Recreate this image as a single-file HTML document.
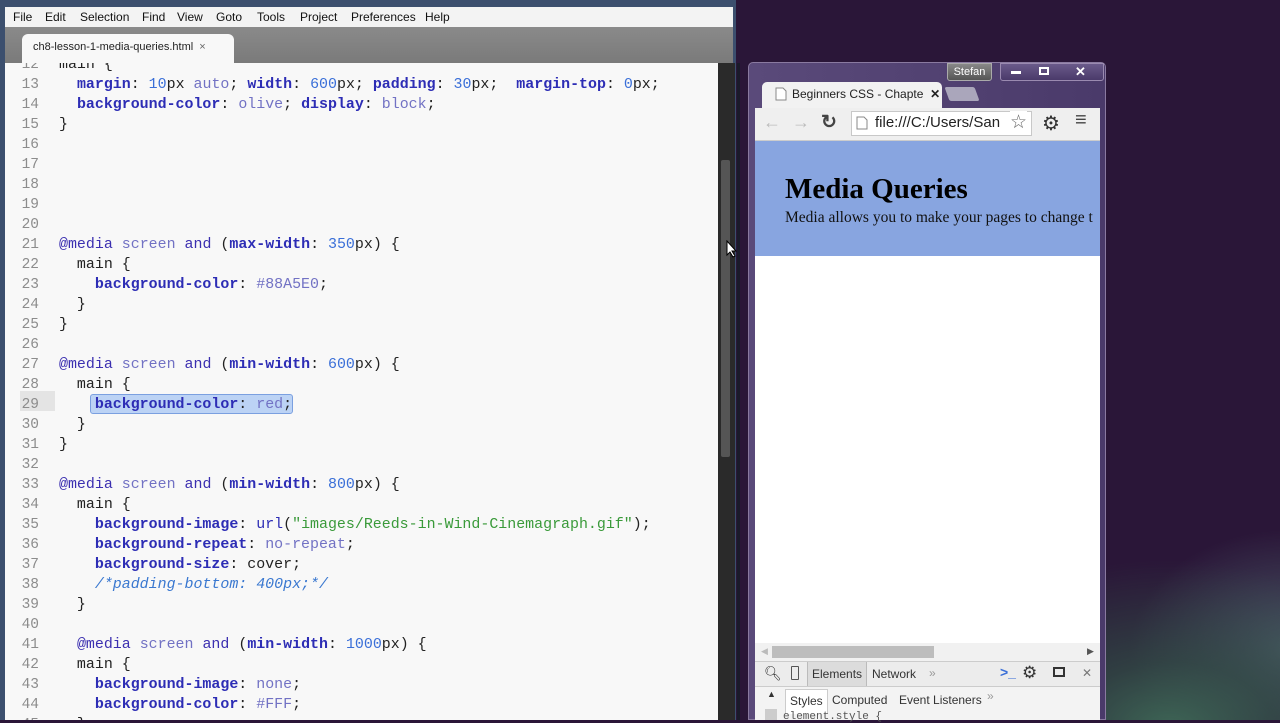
<!DOCTYPE html>
<html><head><meta charset="utf-8"><style>
*{margin:0;padding:0;box-sizing:border-box}
body{width:1280px;height:720px;overflow:hidden;position:relative;background:radial-gradient(ellipse 260px 170px at 1170px 730px,#3e6656 0%,rgba(50,80,70,.7) 40%,rgba(42,22,56,0) 100%),radial-gradient(ellipse 160px 120px at 1290px 650px,#4a5866 0%,rgba(42,22,56,0) 100%),#2a1638;font-family:"Liberation Sans",sans-serif}
.abs{position:absolute}
#ed{left:0;top:0;width:736px;height:720px;background:#3c4f6e}
#menu{left:5px;top:7px;width:728px;height:20px;background:#f3f3f3;font-size:12px;color:#111}
#menu span{position:absolute;top:3px}
#tabbar{left:5px;top:27px;width:728px;height:36px;background:linear-gradient(#8a8a8a,#7a7a7a)}
#tab{left:22px;top:34px;width:212px;height:29px;background:#f8f8f8;border-radius:6px 6px 0 0;font-size:11px;color:#222;padding:7px 0 0 11px}
#code{left:5px;top:63px;width:713px;height:657px;background:#f8f8f8;overflow:hidden}
#sb{left:718px;top:63px;width:17px;height:657px;background:#2a2a2a}
#thumb{left:721px;top:160px;width:9px;height:297px;background:#555;border-radius:2px}
.ln{position:absolute;left:0;width:34px;text-align:right;font-family:"Liberation Mono",monospace;font-size:14.5px;color:#8c8c8c;line-height:20px}
.cl{position:absolute;left:54px;font-family:"Liberation Mono",monospace;font-size:14.95px;line-height:20px;color:#222;white-space:pre}
.p{color:#2d2db5;font-weight:bold}.v{color:#7272c4}.n{color:#3a6fd8}.a{color:#3b2fb0}.s{color:#3a9a3a}.c{color:#3a78d0;font-style:italic}
#bw{left:748px;top:62px;width:358px;height:658px;background:linear-gradient(90deg,#5a4a7a,#4a3a6a);border:1px solid #8a7aa0;border-radius:5px 5px 0 0}
#btab{left:762px;top:82px;width:180px;height:27px;background:#f2f2f2;border-radius:5px 5px 0 0;font-size:12px;color:#222;padding:5px 0 0 30px}
#tool{left:755px;top:108px;width:345px;height:33px;background:#efefef;border-bottom:1px solid #ccc}
#url{left:851px;top:111px;width:181px;height:25px;background:#fff;border:1px solid #c8c8c8;font-size:15px;color:#222;padding:2px 0 0 23px;overflow:hidden;white-space:nowrap}
#blue{left:755px;top:141px;width:345px;height:115px;background:#88a5e0;overflow:hidden}
#white{left:755px;top:256px;width:345px;height:387px;background:#fff}
#hs{left:755px;top:643px;width:345px;height:18px;background:#f1f1f1}
#dt{left:755px;top:661px;width:345px;height:26px;background:#ececec;border-top:1px solid #ccc;border-bottom:1px solid #ccc;font-size:12px;color:#333}
#st{left:755px;top:687px;width:345px;height:33px;background:#f3f3f3;font-size:12px;color:#333}
</style></head><body>
<div id="ed" class="abs"></div>
<div id="menu" class="abs"><span style="left:8px">File</span><span style="left:40px">Edit</span><span style="left:75px">Selection</span><span style="left:137px">Find</span><span style="left:172px">View</span><span style="left:211px">Goto</span><span style="left:252px">Tools</span><span style="left:295px">Project</span><span style="left:346px">Preferences</span><span style="left:420px">Help</span></div>
<div id="tabbar" class="abs"></div>
<div id="tab" class="abs">ch8-lesson-1-media-queries.html &nbsp;<span style="color:#666">×</span></div>
<div id="code" class="abs">
<div class="abs" style="left:15px;top:328px;width:35px;height:20px;background:#e4e4e4"></div>
<div class="abs" style="left:85px;top:331px;width:203px;height:20px;background:#bcd3f5;border:1px solid #7ba0e0;border-radius:3px"></div>
<div style="position:absolute;left:0;top:2px;width:713px;height:660px">
<div class="ln" style="top:-10px">12</div><div class="cl" style="top:-10px">main {</div>
<div class="ln" style="top:10px">13</div><div class="cl" style="top:10px">  <span class="p">margin</span>: <span class="n">10</span>px <span class="v">auto</span>; <span class="p">width</span>: <span class="n">600</span>px; <span class="p">padding</span>: <span class="n">30</span>px;  <span class="p">margin-top</span>: <span class="n">0</span>px;</div>
<div class="ln" style="top:30px">14</div><div class="cl" style="top:30px">  <span class="p">background-color</span>: <span class="v">olive</span>; <span class="p">display</span>: <span class="v">block</span>;</div>
<div class="ln" style="top:50px">15</div><div class="cl" style="top:50px">}</div>
<div class="ln" style="top:70px">16</div><div class="ln" style="top:90px">17</div><div class="ln" style="top:110px">18</div><div class="ln" style="top:130px">19</div><div class="ln" style="top:150px">20</div>
<div class="ln" style="top:170px">21</div><div class="cl" style="top:170px"><span class="a">@media</span> <span class="v">screen</span> <span class="a">and</span> (<span class="p">max-width</span>: <span class="n">350</span>px) {</div>
<div class="ln" style="top:190px">22</div><div class="cl" style="top:190px">  main {</div>
<div class="ln" style="top:210px">23</div><div class="cl" style="top:210px">    <span class="p">background-color</span>: <span class="v">#88A5E0</span>;</div>
<div class="ln" style="top:230px">24</div><div class="cl" style="top:230px">  }</div>
<div class="ln" style="top:250px">25</div><div class="cl" style="top:250px">}</div>
<div class="ln" style="top:270px">26</div>
<div class="ln" style="top:290px">27</div><div class="cl" style="top:290px"><span class="a">@media</span> <span class="v">screen</span> <span class="a">and</span> (<span class="p">min-width</span>: <span class="n">600</span>px) {</div>
<div class="ln" style="top:310px">28</div><div class="cl" style="top:310px">  main {</div>
<div class="ln" style="top:330px">29</div><div class="cl" style="top:330px">    <span class="p">background-color</span>: <span class="v">red</span>;</div>
<div class="ln" style="top:350px">30</div><div class="cl" style="top:350px">  }</div>
<div class="ln" style="top:370px">31</div><div class="cl" style="top:370px">}</div>
<div class="ln" style="top:390px">32</div>
<div class="ln" style="top:410px">33</div><div class="cl" style="top:410px"><span class="a">@media</span> <span class="v">screen</span> <span class="a">and</span> (<span class="p">min-width</span>: <span class="n">800</span>px) {</div>
<div class="ln" style="top:430px">34</div><div class="cl" style="top:430px">  main {</div>
<div class="ln" style="top:450px">35</div><div class="cl" style="top:450px">    <span class="p">background-image</span>: <span class="p" style="font-weight:normal">url</span>(<span class="s">"images/Reeds-in-Wind-Cinemagraph.gif"</span>);</div>
<div class="ln" style="top:470px">36</div><div class="cl" style="top:470px">    <span class="p">background-repeat</span>: <span class="v">no-repeat</span>;</div>
<div class="ln" style="top:490px">37</div><div class="cl" style="top:490px">    <span class="p">background-size</span>: cover;</div>
<div class="ln" style="top:510px">38</div><div class="cl" style="top:510px">    <span class="c">/*padding-bottom: 400px;*/</span></div>
<div class="ln" style="top:530px">39</div><div class="cl" style="top:530px">  }</div>
<div class="ln" style="top:550px">40</div>
<div class="ln" style="top:570px">41</div><div class="cl" style="top:570px">  <span class="a">@media</span> <span class="v">screen</span> <span class="a">and</span> (<span class="p">min-width</span>: <span class="n">1000</span>px) {</div>
<div class="ln" style="top:590px">42</div><div class="cl" style="top:590px">  main {</div>
<div class="ln" style="top:610px">43</div><div class="cl" style="top:610px">    <span class="p">background-image</span>: <span class="v">none</span>;</div>
<div class="ln" style="top:630px">44</div><div class="cl" style="top:630px">    <span class="p">background-color</span>: <span class="v">#FFF</span>;</div>
<div class="ln" style="top:650px">45</div><div class="cl" style="top:650px">  }</div>
</div>
</div>
<div id="sb" class="abs"></div><div id="thumb" class="abs"></div>
<div class="abs" style="left:737px;top:63px;width:3px;height:657px;background:#1a1a2a"></div>
<svg class="abs" style="left:726px;top:240px" width="12" height="18"><path d="M1 1 L1 15 L4 12 L7 17 L9 16 L6 11 L10 11 Z" fill="#fff" stroke="#000" stroke-width="1"/></svg>
<div id="bw" class="abs"></div>
<div class="abs" style="left:947px;top:63px;width:45px;height:18px;background:linear-gradient(#888,#555);border:1px solid #aaa;border-radius:0 0 3px 3px;color:#fff;font-size:11px;text-align:center;line-height:16px">Stefan</div>
<div class="abs" style="left:1000px;top:63px;width:104px;height:18px;background:linear-gradient(#6a5a8a,#4a3a6a);border:1px solid #9a8ab0;border-radius:0 0 3px 3px;color:#fff;font-size:12px"><span class="abs" style="left:10px;top:7px;width:10px;height:3px;background:#fff"></span><span class="abs" style="left:38px;top:3px;width:10px;height:8px;border:2px solid #fff"></span><span class="abs" style="left:74px;top:0;font-weight:bold;font-size:13px">✕</span></div>
<div id="btab" class="abs">Beginners CSS - Chapte &nbsp;<b style="font-size:12px">✕</b></div>
<svg class="abs" style="left:775px;top:87px" width="12" height="14"><path d="M1 1h7l3 3v9H1z" fill="#fff" stroke="#888"/></svg>
<div class="abs" style="left:947px;top:87px;width:30px;height:14px;background:#aaa6bb;transform:skewX(20deg);border-radius:2px"></div>
<div id="tool" class="abs"></div>
<div class="abs" style="left:763px;top:112px;font-size:18px;color:#bbb">←</div>
<div class="abs" style="left:792px;top:112px;font-size:18px;color:#bbb">→</div>
<div class="abs" style="left:821px;top:111px;font-size:19px;color:#444;font-weight:bold">↻</div>
<div id="url" class="abs">file:///C:/Users/San</div>
<svg class="abs" style="left:856px;top:116px" width="12" height="14"><path d="M1 1h7l3 3v9H1z" fill="#fff" stroke="#888"/></svg>
<div class="abs" style="left:1010px;top:111px;font-size:19px;color:#666;background:#fff">☆</div>
<div class="abs" style="left:1042px;top:111px;font-size:20px;color:#333">⚙</div>
<div class="abs" style="left:1075px;top:109px;font-size:20px;color:#444">≡</div>
<div id="blue" class="abs"><div class="abs" style="left:30px;top:32px;font-family:'Liberation Serif',serif;font-weight:bold;font-size:29px;color:#000;white-space:nowrap">Media Queries</div><div class="abs" style="left:30px;top:68px;font-family:'Liberation Serif',serif;font-size:15.5px;color:#111;white-space:nowrap">Media allows you to make your pages to change t</div></div>
<div id="white" class="abs"></div>
<div id="hs" class="abs"><div class="abs" style="left:17px;top:3px;width:162px;height:12px;background:#bdbdbd"></div><div class="abs" style="left:6px;top:3px;font-size:9px;color:#bbb">◀</div><div class="abs" style="left:332px;top:3px;font-size:9px;color:#555">▶</div></div>
<div id="dt" class="abs"><span class="abs" style="left:9px;top:3px;font-size:14px">🔍︎</span><span class="abs" style="left:36px;top:4px;width:8px;height:14px;border:1px solid #555;border-radius:1px"></span><span class="abs" style="left:52px;top:0;height:24px;padding:5px 4px;background:#dcdcdc;border-left:1px solid #bbb;border-right:1px solid #bbb">Elements</span><span class="abs" style="left:117px;top:5px">Network</span><span class="abs" style="left:174px;top:4px;color:#999">»</span><span class="abs" style="left:245px;top:2px;color:#3a6fd8;font-weight:bold;font-size:14px">&gt;_</span><span class="abs" style="left:267px;top:1px;font-size:17px">⚙</span><span class="abs" style="left:298px;top:5px;width:12px;height:10px;border:2px solid #333"></span><span class="abs" style="left:327px;top:4px;color:#777">✕</span></div>
<div id="st" class="abs"><span class="abs" style="left:12px;top:2px;font-size:9px">▲</span><span class="abs" style="left:10px;top:22px;width:12px;height:11px;background:#ccc"></span><span class="abs" style="left:30px;top:2px;padding:4px 4px 6px;background:#fff;border:1px solid #ccc;border-bottom:none">Styles</span><span class="abs" style="left:77px;top:6px">Computed</span><span class="abs" style="left:144px;top:6px">Event Listeners</span><span class="abs" style="left:232px;top:2px;color:#999">»</span><span class="abs" style="left:28px;top:24px;font-family:'Liberation Mono',monospace;font-size:11px;color:#555">element.style {</span></div>
</body></html>
